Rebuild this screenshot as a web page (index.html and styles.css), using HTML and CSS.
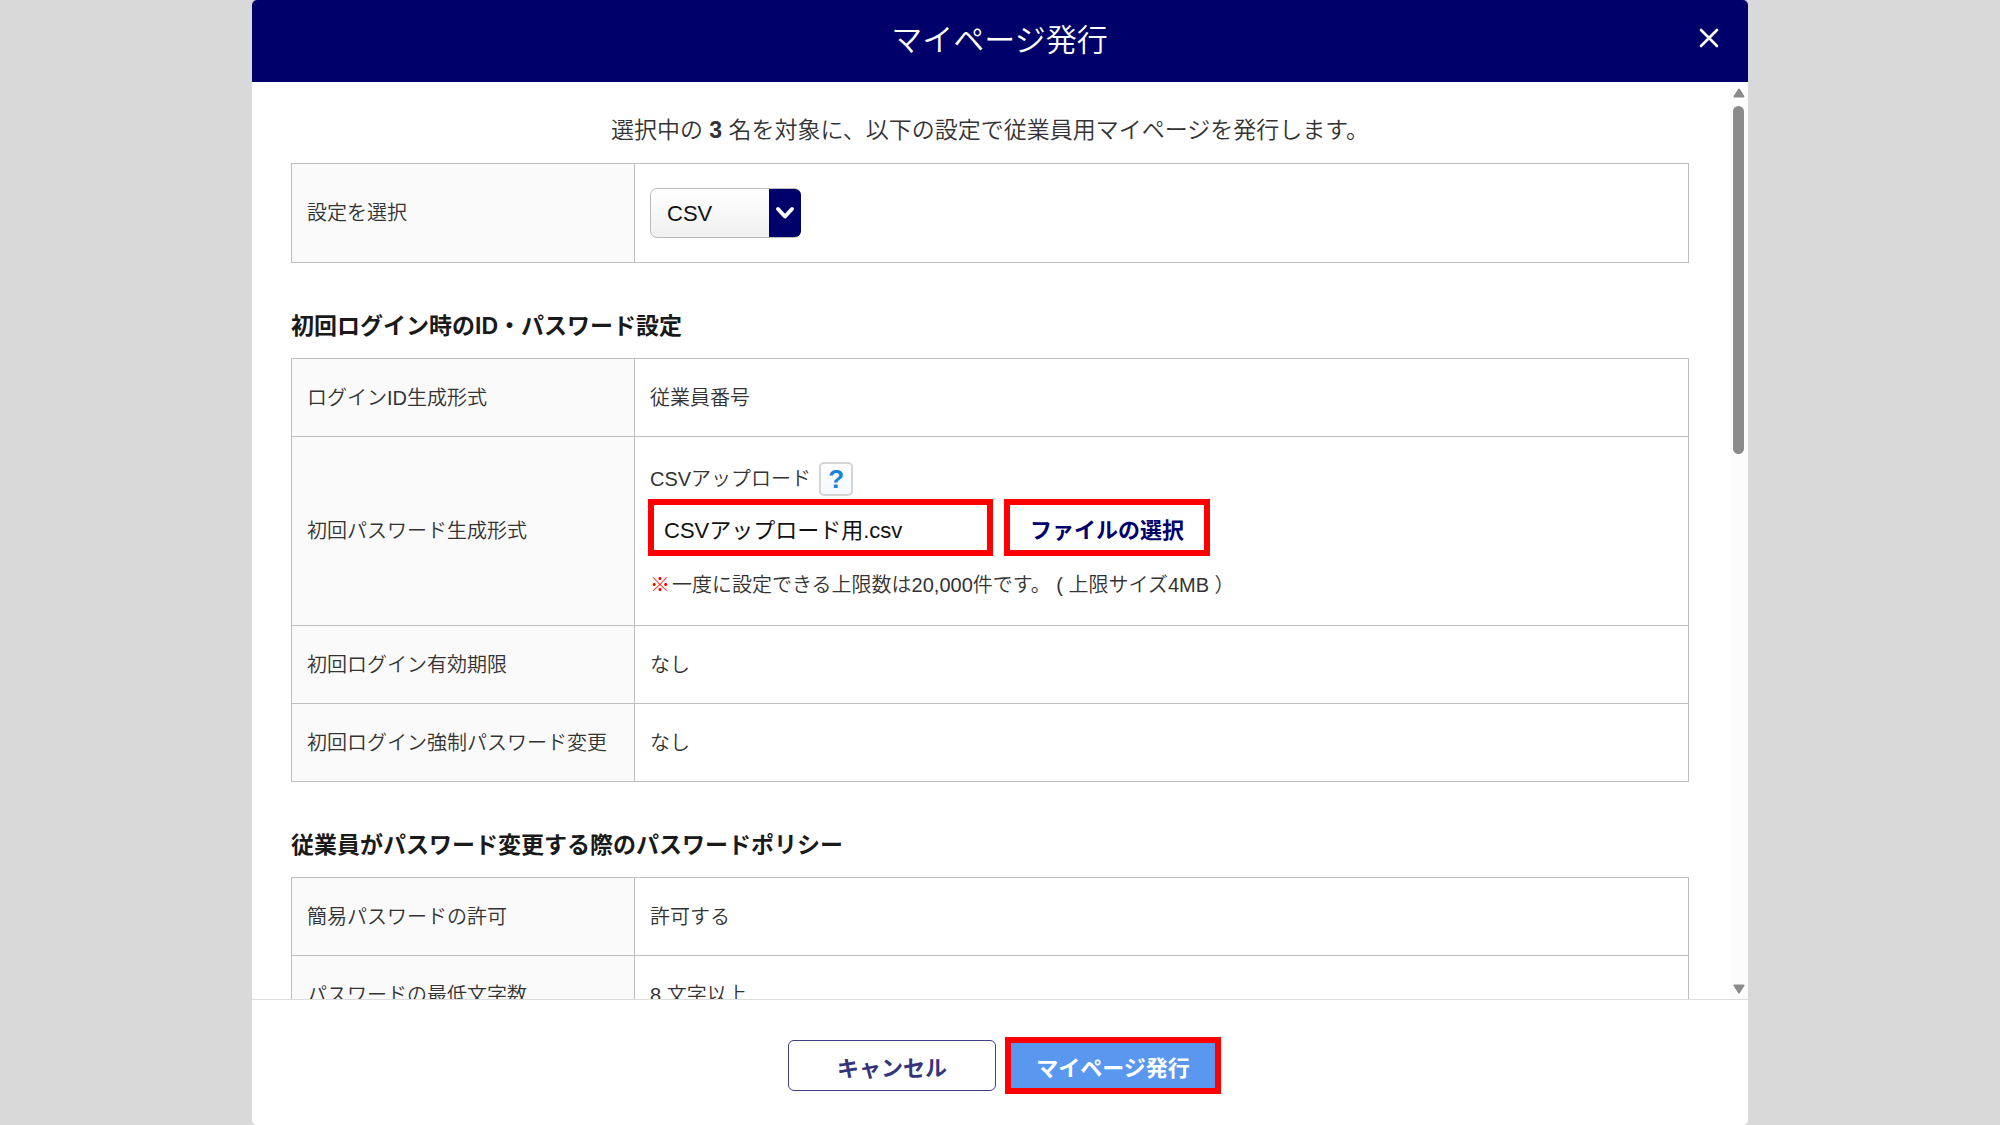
FILE: index.html
```html
<!DOCTYPE html>
<html lang="ja">
<head>
<meta charset="utf-8">
<meta name="viewport" content="width=device-width, initial-scale=1">
<title>マイページ発行</title>
<link rel="stylesheet" href="styles.css">
</head>
<body>
<main class="modal" role="dialog" aria-labelledby="modal-title">
  <header class="modal-header">
    <h1 class="modal-title" id="modal-title">マイページ発行</h1>
    <button class="close" type="button" aria-label="閉じる">
      <svg viewBox="0 0 20 20" width="20" height="20" aria-hidden="true"><path d="M2 2L18 18M18 2L2 18" fill="none" stroke="currentColor" stroke-width="2.6" stroke-linecap="round"/></svg>
    </button>
  </header>

  <div class="modal-body">
    <div class="content">
      <p class="lead">選択中の <strong>3</strong> 名を対象に、以下の設定で従業員用マイページを発行します。</p>

      <table class="settings">
        <tr class="row-select">
          <th scope="row"><label for="preset">設定を選択</label></th>
          <td>
            <div class="select-box">
              <select class="select" id="preset"><option>CSV</option></select>
              <span class="select-arrow"><svg viewBox="0 0 20 14" width="20" height="14" aria-hidden="true"><path d="M3 3L10 10.500L17 3" fill="none" stroke="currentColor" stroke-width="4" stroke-linecap="round" stroke-linejoin="round"/></svg></span>
            </div>
          </td>
        </tr>
      </table>

      <h2 class="section-title">初回ログイン時のID・パスワード設定</h2>
      <table class="settings">
        <tr><th scope="row">ログインID生成形式</th><td>従業員番号</td></tr>
        <tr>
          <th scope="row">初回パスワード生成形式</th>
          <td class="upload-cell">
            <div class="upload-label">
              <label for="csv-name">CSVアップロード</label>
              <button class="help" type="button" aria-label="ヘルプ">?</button>
            </div>
            <div class="upload-row">
              <input class="file-name marked" id="csv-name" type="text" value="CSVアップロード用.csv" readonly>
              <button class="file-pick marked" type="button">ファイルの選択</button>
            </div>
            <p class="note"><span class="note-mark">※</span>一度に設定できる上限数は20,000件です。 ( 上限サイズ4MB ）</p>
          </td>
        </tr>
        <tr><th scope="row">初回ログイン有効期限</th><td>なし</td></tr>
        <tr><th scope="row">初回ログイン強制パスワード変更</th><td>なし</td></tr>
      </table>

      <h2 class="section-title">従業員がパスワード変更する際のパスワードポリシー</h2>
      <table class="settings">
        <tr><th scope="row">簡易パスワードの許可</th><td>許可する</td></tr>
        <tr><th scope="row">パスワードの最低文字数</th><td>8 文字以上</td></tr>
      </table>
    </div>

    <div class="scrollbar" aria-hidden="true">
      <svg viewBox="0 0 12 10" width="12" height="10"><path d="M6 1.500L10.500 8.500H1.500Z" fill="#8b8b8b" stroke="#8b8b8b" stroke-width="2" stroke-linejoin="round"/></svg>
      <div class="scroll-track"><div class="scroll-thumb"></div></div>
      <svg viewBox="0 0 12 10" width="12" height="10"><path d="M6 8.500L10.500 1.500H1.500Z" fill="#8b8b8b" stroke="#8b8b8b" stroke-width="2" stroke-linejoin="round"/></svg>
    </div>
  </div>

  <footer class="modal-footer">
    <button class="btn-cancel" type="button">キャンセル</button>
    <button class="btn-primary marked" type="button">マイページ発行</button>
  </footer>
</main>
</body>
</html>
```
FILE: styles.css
```css
* {
  box-sizing: border-box;
}

body {
  margin: 0;
  background: #d9d9d9;
  color: #333;
  font-family: "Liberation Sans", "Noto Sans CJK JP", sans-serif;
  font-size: 20px;
  font-weight: 350;
  line-height: 30px;
}

button,
input,
select {
  font-family: inherit;
  margin: 0;
}

.modal {
  display: flex;
  flex-direction: column;
  width: 75%;
  max-width: 1496px;
  height: 100vh;
  margin: 0 auto;
  border-radius: 5px;
  background: #fff;
  overflow: hidden;
}

.modal-header {
  display: grid;
  grid-template-columns: 60px 1fr 60px;
  align-items: center;
  flex: none;
  height: 82px;
  padding-right: 9px;
  padding-left: 8px;
  background: #00006a;
  color: #fff;
}

.modal-title {
  grid-column: 2;
  margin: 0;
  font-size: 31px;
  font-weight: 350;
  line-height: 40px;
  text-align: center;
}

.close {
  display: flex;
  justify-content: center;
  padding: 8px 0 14px;
  border: 0;
  background: none;
  color: inherit;
}

.modal-body {
  display: flex;
  flex: 1;
  min-height: 0;
}

.content {
  flex: 1;
  padding: 32px 41px 0 39px;
  overflow-y: auto;
  scrollbar-width: none;
}

.lead {
  margin: 0 0 17px;
  font-size: 23px;
  line-height: 32px;
  text-align: center;
}

.lead strong {
  font-weight: 700;
}

.settings {
  width: 100%;
  border-collapse: collapse;
  table-layout: fixed;
}

.settings th,
.settings td {
  height: 78px;
  padding: 0 15px;
  border: 1px solid #bfbfbf;
  text-align: left;
  vertical-align: middle;
}

.settings th {
  width: 343px;
  background: #fafafa;
  font-weight: 350;
  white-space: nowrap;
}

.settings .row-select td {
  height: 99px;
}

.section-title {
  margin: 45px 0 14px;
  color: #1a1a1a;
  font-size: 23px;
  font-weight: 700;
  line-height: 36px;
}

.select-box {
  display: grid;
  width: 151px;
  height: 50px;
}

.select {
  grid-area: 1 / 1;
  padding: 0 16px;
  border: 1px solid #bbb;
  border-radius: 7px;
  background: linear-gradient(#fff, #f0f0f0);
  color: #111;
  font-size: 22px;
  appearance: none;
}

.select-arrow {
  display: flex;
  grid-area: 1 / 1;
  justify-self: end;
  align-items: center;
  justify-content: center;
  width: 32px;
  margin: 1px 0;
  border-radius: 0 6px 6px 0;
  background: #00006a;
  color: #fff;
  pointer-events: none;
}

.settings .upload-cell {
  height: 189px;
  padding: 4px 15px;
}

.upload-label {
  display: flex;
  align-items: center;
  gap: 8px;
}

.help {
  width: 34px;
  height: 34px;
  padding: 0;
  border: 2px solid #d4d4d4;
  border-radius: 5px;
  background: linear-gradient(#fff, #f4f9fd);
  color: #1583dc;
  font-size: 26px;
  font-weight: 700;
  line-height: 28px;
}

.upload-row {
  display: flex;
  gap: 11px;
  margin: 3px -2px 14px;
}

.marked {
  border: 6px solid #f00;
}

.file-name {
  width: 345px;
  height: 57px;
  padding: 0 10px;
  background: #fff;
  color: #111;
  font-size: 22px;
}

.file-pick {
  width: 206px;
  height: 57px;
  padding: 0;
  background: #fff;
  color: #00006a;
  font-size: 22px;
  font-weight: 700;
}

.note {
  margin: 0;
}

.note-mark {
  margin-right: 2px;
  color: #f00;
  font-weight: 700;
}

.scrollbar {
  display: flex;
  flex-direction: column;
  align-items: center;
  gap: 8px;
  width: 18px;
  padding: 6px 4px 5px 3px;
  background: #fcfcfc;
}

.scrollbar svg {
  flex: none;
}

.scroll-track {
  flex: 1;
  width: 11px;
}

.scroll-thumb {
  height: 40%;
  border-radius: 6px;
  background: #8b8b8b;
}

.modal-footer {
  display: flex;
  align-items: center;
  justify-content: center;
  gap: 9px;
  flex: none;
  height: 126px;
  padding: 6px 0 0 9px;
  border-top: 1px solid #ddd;
}

.btn-cancel,
.btn-primary {
  padding: 0;
  font-size: 22px;
  font-weight: 700;
}

.btn-cancel {
  width: 208px;
  height: 51px;
  border: 1px solid #40407f;
  border-radius: 6px;
  background: #fff;
  color: #35357a;
}

.btn-primary {
  width: 216px;
  height: 57px;
  background: #5a98f0;
  color: #fff;
}
```
